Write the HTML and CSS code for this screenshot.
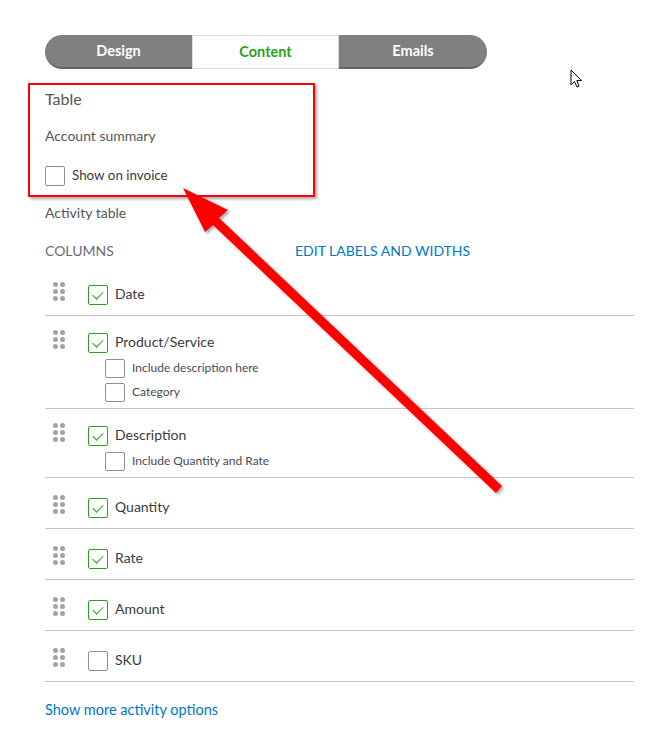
FILE: index.html
```html
<!DOCTYPE html>
<html lang="en">
<head>
    <meta charset="UTF-8">
    <title>Invoice content</title>
    <link rel="stylesheet" href="styles.css">
</head>
<body>
    <div class="page">
        <div class="tabs">
            <div class="tab tab-left">Design</div>
            <div class="tab tab-active">Content</div>
            <div class="tab tab-right">Emails</div>
        </div>

        <div class="table-block">
            <div class="block-title">Table</div>
            <div class="block-label">Account summary</div>
            <label class="option">
                <span class="box"></span>
                <span class="option-text">Show on invoice</span>
            </label>
            <div class="highlight"></div>
        </div>

        <div class="block-label activity">Activity table</div>

        <div class="columns-head">
            <span class="columns-title">COLUMNS</span>
            <a href="#" class="edit-link">EDIT LABELS AND WIDTHS</a>
        </div>

        <div class="col-list">
            <div class="col-row">
                <span class="handle"><i></i><i></i><i></i><i></i><i></i><i></i></span>
                <div class="col-main">
                    <div class="col-line"><span class="box checked"></span><span class="col-name">Date</span></div>
                </div>
            </div>
            <div class="col-row has-subs">
                <span class="handle"><i></i><i></i><i></i><i></i><i></i><i></i></span>
                <div class="col-main">
                    <div class="col-line"><span class="box checked"></span><span class="col-name">Product/Service</span></div>
                    <div class="sub-line"><span class="box small"></span><span class="sub-name">Include description here</span></div>
                    <div class="sub-line"><span class="box small"></span><span class="sub-name">Category</span></div>
                </div>
            </div>
            <div class="col-row has-subs">
                <span class="handle"><i></i><i></i><i></i><i></i><i></i><i></i></span>
                <div class="col-main">
                    <div class="col-line"><span class="box checked"></span><span class="col-name">Description</span></div>
                    <div class="sub-line"><span class="box small"></span><span class="sub-name">Include Quantity and Rate</span></div>
                </div>
            </div>
            <div class="col-row">
                <span class="handle"><i></i><i></i><i></i><i></i><i></i><i></i></span>
                <div class="col-main">
                    <div class="col-line"><span class="box checked"></span><span class="col-name">Quantity</span></div>
                </div>
            </div>
            <div class="col-row">
                <span class="handle"><i></i><i></i><i></i><i></i><i></i><i></i></span>
                <div class="col-main">
                    <div class="col-line"><span class="box checked"></span><span class="col-name">Rate</span></div>
                </div>
            </div>
            <div class="col-row">
                <span class="handle"><i></i><i></i><i></i><i></i><i></i><i></i></span>
                <div class="col-main">
                    <div class="col-line"><span class="box checked"></span><span class="col-name">Amount</span></div>
                </div>
            </div>
            <div class="col-row">
                <span class="handle"><i></i><i></i><i></i><i></i><i></i><i></i></span>
                <div class="col-main">
                    <div class="col-line"><span class="box"></span><span class="col-name">SKU</span></div>
                </div>
            </div>
        </div>

        <a href="#" class="more-link">Show more activity options</a>
    </div>

    <!-- annotation arrow drawn over the page -->
    <svg class="arrow" width="651" height="750" viewBox="0 0 651 750">
        <defs>
            <filter id="shadow" x="-10%" y="-10%" width="130%" height="130%">
                <feDropShadow dx="2" dy="2" stdDeviation="1.5" flood-color="#000" flood-opacity="0.35"/>
            </filter>
        </defs>
        <g filter="url(#shadow)" fill="#ff0000">
            <polygon points="183,188 228,210 219,218 502,486 496,493 213,225 205,232"/>
        </g>
    </svg>

    <svg class="cursor" width="13" height="20" viewBox="0 0 13 20">
        <path d="M1 1 L1 16 L4.5 12.5 L7 18 L9 17 L6.8 11.6 L11.5 11.6 Z" fill="#fff" stroke="#000" stroke-width="1"/>
    </svg>
</body>
</html>
```

FILE: styles.css
```css
* {
    margin: 0;
    padding: 0;
    box-sizing: border-box;
}

body {
    font-family: 'Lato', 'Liberation Sans', sans-serif;
    background-color: #ffffff;
    color: #393a3d;
    width: 651px;
    height: 750px;
    position: relative;
    overflow: hidden;
}

.page {
    padding: 35px 17px 0 45px;
}

.tabs {
    display: flex;
    width: 442px;
    height: 34px;
}

.tab {
    display: flex;
    align-items: center;
    justify-content: center;
    padding-bottom: 1px;
    font-size: 14.5px;
    font-weight: bold;
    color: #ffffff;
    background-color: #808080;
    border-bottom: 2px solid #666666;
}

.tab-left {
    width: 147px;
    border-radius: 17px 0 0 17px;
}

.tab-active {
    width: 147px;
    background-color: #ffffff;
    color: #2ca01c;
    border: 1px solid #dcdcdc;
}

.tab-right {
    width: 148px;
    border-radius: 0 17px 17px 0;
}

.table-block {
    position: relative;
    margin-top: 20px;
}

.block-title {
    font-size: 16px;
    line-height: 19px;
    padding-bottom: 1px;
    color: #555555;
}

.block-label {
    font-size: 14px;
    line-height: 20px;
    color: #555555;
    margin-top: 17px;
}

.option {
    display: flex;
    align-items: center;
    gap: 7px;
    margin-top: 20px;
}

.option-text {
    font-size: 13.4px;
    padding-bottom: 2px;
    color: #393a3d;
}

.highlight {
    position: absolute;
    left: -17px;
    top: -6px;
    width: 287px;
    height: 114px;
    border: 2px solid #ff0000;
    box-shadow: 2px 2px 3px rgba(0, 0, 0, 0.35);
}

.activity {
    margin-top: 17px;
}

.columns-head {
    display: flex;
    margin-top: 18px;
    line-height: 20px;
    font-size: 14px;
}

.columns-title {
    width: 250px;
    color: #6b6c72;
}

.edit-link {
    color: #0077c5;
    text-decoration: none;
}

.col-list {
    margin-top: 4px;
    width: 589px;
}

.col-row {
    display: flex;
    align-items: flex-start;
    padding: 20px 0 10px;
    border-bottom: 1px solid #c6c6c6;
}

.col-row.has-subs {
    padding: 17px 0 6px;
}

.handle {
    display: grid;
    grid-template-columns: 5px 5px;
    gap: 2px 2px;
    margin: -3px 0 0 8px;
    width: 35px;
}

.handle i {
    width: 5px;
    height: 5px;
    border-radius: 50%;
    background-color: #a3a3a3;
}

.col-line {
    display: flex;
    align-items: center;
    height: 20px;
    gap: 7px;
}

.col-name {
    font-size: 14px;
    padding-bottom: 3px;
}

.sub-line {
    display: flex;
    align-items: center;
    gap: 7px;
    height: 19px;
    margin: 6px 0 0 17px;
}

.sub-line + .sub-line {
    margin-top: 5px;
}

.sub-name {
    font-size: 12px;
    padding-bottom: 2px;
    color: #4a4b50;
}

.box {
    width: 20px;
    height: 20px;
    border: 1px solid #8d9096;
    border-radius: 2px;
    background-color: #ffffff;
    flex-shrink: 0;
    position: relative;
}

.box.small {
    width: 20px;
    height: 19px;
}

.box.checked {
    border-color: #2ca01c;
}

.box.checked::after {
    content: "";
    position: absolute;
    left: 6px;
    top: 3px;
    width: 5px;
    height: 9px;
    border-right: 1.5px solid #2ca01c;
    border-bottom: 1.5px solid #2ca01c;
    transform: rotate(45deg);
}

.more-link {
    display: block;
    margin-top: 18px;
    font-size: 14.5px;
    line-height: 20px;
    color: #0077c5;
    text-decoration: none;
}

.arrow {
    position: absolute;
    left: 0;
    top: 0;
    pointer-events: none;
}

.cursor {
    position: absolute;
    left: 570px;
    top: 69px;
}
```
